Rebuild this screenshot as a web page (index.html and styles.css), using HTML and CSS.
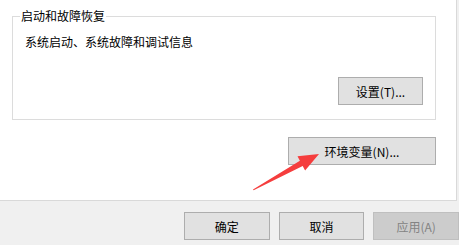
FILE: index.html
```html
<!DOCTYPE html>
<html lang="zh-CN">
<head>
    <meta charset="UTF-8">
    <title>系统属性 - 高级</title>
    <link rel="stylesheet" href="styles.css">
</head>
<body>
    <div class="panel">
        <fieldset class="group">
            <legend>启动和故障恢复</legend>
            <p class="desc">系统启动、系统故障和调试信息</p>
            <div class="group-actions">
                <button class="btn btn-settings">设置(T)...</button>
            </div>
        </fieldset>
        <div class="env-row">
            <button class="btn btn-env">环境变量(N)...</button>
        </div>
    </div>

    <div class="footer">
        <button class="btn btn-foot">确定</button>
        <button class="btn btn-foot">取消</button>
        <button class="btn btn-foot" disabled>应用(A)</button>
    </div>

    <!-- red annotation arrow -->
    <svg class="arrow" width="459" height="245" viewBox="0 0 459 245">
        <polygon points="253,189.5 299.9,160.8 297.5,156.3 319,154 305.1,170.5 302.7,166 253.6,190.3" fill="#f53d3d"/>
    </svg>
</body>
</html>
```

FILE: styles.css
```css
body {
    margin: 0;
    width: 459px;
    height: 245px;
    overflow: hidden;
    background-color: #f0f0f0;
    font-family: "Noto Sans CJK SC", "Microsoft YaHei", sans-serif;
    font-size: 12px;
    color: #000;
    position: relative;
}
.panel {
    box-sizing: border-box;
    width: 457px;
    height: 201px;
    background-color: #fff;
    border-right: 1px solid #d9d9d9;
    border-bottom: 1px solid #d9d9d9;
    padding: 10px 0 0 12px;
}
.group {
    box-sizing: border-box;
    width: 424px;
    height: 110px;
    margin: 0;
    padding: 0 12px 14px 12px;
    border: 1px solid #dcdcdc;
    display: flex;
    flex-direction: column;
}
.group legend {
    padding: 0 1px;
    margin-left: -5px;
    line-height: 12px;
}
.desc {
    margin: 12px 0 0 0;
    line-height: 16px;
}
.group-actions {
    display: flex;
    justify-content: flex-end;
    margin-top: auto;
}
.btn {
    box-sizing: border-box;
    height: 28px;
    padding: 0;
    background-color: #e1e1e1;
    border: 1px solid #adadad;
    border-radius: 0;
    font-family: inherit;
    font-size: 12px;
    color: #000;
}
.btn-settings {
    width: 85px;
}
.env-row {
    display: flex;
    justify-content: flex-start;
    padding-left: 276px;
    margin-top: 17px;
}
.btn-env {
    width: 148px;
}
.footer {
    display: flex;
    gap: 9px;
    padding: 11px 0 0 184px;
}
.btn-foot {
    width: 87px;
}
.btn-foot:disabled {
    background-color: #cccccc;
    border-color: #bfbfbf;
    color: #838383;
}
.arrow {
    position: absolute;
    left: 0;
    top: 0;
}
```
